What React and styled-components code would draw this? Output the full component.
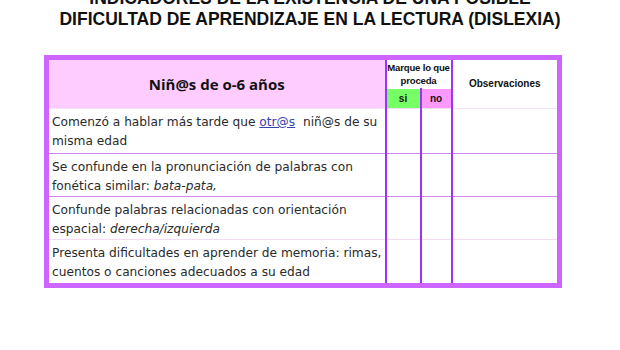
import React from 'react';
import styled, { createGlobalStyle } from 'styled-components';

const GlobalStyle = createGlobalStyle`
  html, body {
    margin: 0;
    padding: 0;
    background: #fff;
    width: 620px;
    height: 350px;
    overflow: hidden;
  }
`;

// page wrapper
const Page = styled.div`
  width: 620px;
  height: 350px;
  overflow: hidden;
  background: #fff;
`;

// title block, the first line is cut by the top edge
const Title = styled.h1`
  margin: -12px 0 0 0;
  font-family: "Liberation Sans", Arial, sans-serif;
  font-weight: bold;
  font-size: 17.5px;
  line-height: 21px;
  text-align: center;
  color: #111;
`;

const TableWrap = styled.div`
  margin: 25px 0 0 44px;
  width: 518px;
`;

const Table = styled.table`
  width: 100%;
  border-collapse: collapse;
  border: 5px solid #cc66ff;
  table-layout: fixed;
`;

const HeadCell = styled.th`
  padding: 0;
  font-family: "Liberation Sans", Arial, sans-serif;
  font-weight: bold;
  color: #111;
  text-align: center;
  background: ${(p) => p.$bg || '#fff'};
  border-left: ${(p) => (p.$line ? '2px solid #9933ff' : 'none')};
  border-bottom: 1px solid ${(p) => p.$bottom || '#f3e3f3'};
  height: ${(p) => p.$h || 'auto'};
  font-size: ${(p) => p.$size || '10px'};
  line-height: ${(p) => p.$lh || '14px'};
  letter-spacing: ${(p) => p.$ls || 'normal'};
`;

const HeadTitle = styled.span`
  font-family: "Open Sans", "Liberation Sans", sans-serif;
  font-size: 15px;
  line-height: 18px;
`;

const Cell = styled.td`
  padding: 0 3px;
  vertical-align: top;
  border-left: ${(p) => (p.$line ? '2px solid #9933ff' : 'none')};
  border-bottom: 1px solid ${(p) => p.$bottom || '#cc88ee'};
  height: ${(p) => p.$h || '42px'};
`;

const ItemText = styled.div`
  font-family: "DejaVu Sans", sans-serif;
  font-size: 12.2px;
  line-height: 19px;
  color: #2a2a2a;
  padding-top: 4px;
`;

const Link = styled.span`
  color: #3344aa;
  text-decoration: underline;
`;

const items = [
  {
    text: (
      <>
        Comenzó a hablar más tarde que <Link>otr@s</Link>&nbsp; niñ@s de su misma edad
      </>
    ),
    line: '#cc88ee',
    h: '44px',
  },
  {
    text: (
      <>
        Se confunde en la pronunciación de palabras con fonética similar: <i>bata-pata,</i>
      </>
    ),
    line: '#cc88ee',
    h: '41px',
  },
  {
    text: (
      <>
        Confunde palabras relacionadas con orientación espacial: <i>derecha/izquierda</i>
      </>
    ),
    line: '#f3dcf3',
    h: '42px',
  },
  {
    text: <>Presenta dificultades en aprender de memoria: rimas, cuentos o canciones adecuados a su edad</>,
    line: 'transparent',
    h: '43px',
  },
];

const App = () => (
  <Page>
    <GlobalStyle />
    <Title>
      INDICADORES DE LA EXISTENCIA DE UNA POSIBLE
      <br />
      DIFICULTAD DE APRENDIZAJE EN LA LECTURA (DISLEXIA)
    </Title>
    <TableWrap>
      <Table>
        <colgroup>
          <col style={{ width: '339px' }} />
          <col style={{ width: '35px' }} />
          <col style={{ width: '31px' }} />
          <col />
        </colgroup>
        <thead>
          <tr>
            <HeadCell rowSpan={2} $bg="#ffccff">
              <HeadTitle>Niñ@s de o-6 años</HeadTitle>
            </HeadCell>
            <HeadCell
              colSpan={2}
              $line
              $h="28px"
              $size="9.6px"
              $lh="13px"
              $ls="-0.2px"
              $bottom="#ffffff"
            >
              Marque lo que proceda
            </HeadCell>
            <HeadCell rowSpan={2} $line $size="10px">
              Observaciones
            </HeadCell>
          </tr>
          <tr>
            <HeadCell $line $bg="#77ff66" $h="19px" $size="10px">
              si
            </HeadCell>
            <HeadCell $line $bg="#ff99ff" $h="19px" $size="10px">
              no
            </HeadCell>
          </tr>
        </thead>
        <tbody>
          {items.map((item, i) => (
            <tr key={i}>
              <Cell $bottom={item.line} $h={item.h}>
                <ItemText>{item.text}</ItemText>
              </Cell>
              <Cell $line $bottom={item.line} $h={item.h} />
              <Cell $line $bottom={item.line} $h={item.h} />
              <Cell $line $bottom={item.line} $h={item.h} />
            </tr>
          ))}
        </tbody>
      </Table>
    </TableWrap>
  </Page>
);

export default App;
